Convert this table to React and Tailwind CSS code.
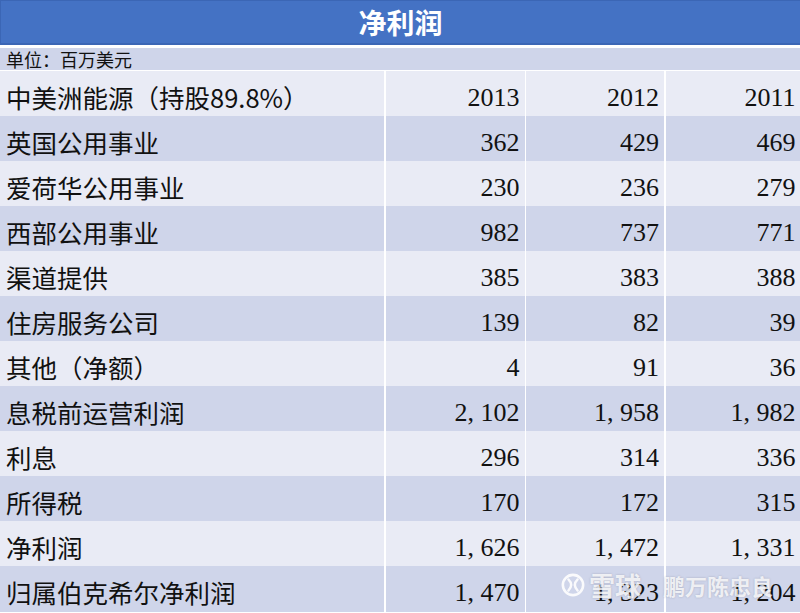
import React from "react";

const rows = [
  ["中美洲能源（持股89.8%）", "2013", "2012", "2011"],
  ["英国公用事业", "362", "429", "469"],
  ["爱荷华公用事业", "230", "236", "279"],
  ["西部公用事业", "982", "737", "771"],
  ["渠道提供", "385", "383", "388"],
  ["住房服务公司", "139", "82", "39"],
  ["其他（净额）", "4", "91", "36"],
  ["息税前运营利润", "2, 102", "1, 958", "1, 982"],
  ["利息", "296", "314", "336"],
  ["所得税", "170", "172", "315"],
  ["净利润", "1, 626", "1, 472", "1, 331"],
  ["归属伯克希尔净利润", "1, 470", "1, 323", "1, 204"],
];

const cjk = { fontFamily: '"Noto Sans CJK SC", "Noto Sans", sans-serif' };
const serif = { fontFamily: '"Liberation Serif", "DejaVu Serif", serif' };

export default function App() {
  return (
    <div className="relative w-[800px] h-[613px] bg-white overflow-hidden">
      <div
        className="h-[45px] bg-[#4472c4] border-t border-l border-b-2 border-[#3b66b5] flex items-center justify-center text-white text-[28px] font-bold"
        style={cjk}
      >
        净利润
      </div>
      <div
        className="mt-[3px] h-[22px] bg-[#cfd5ea] flex items-center pl-[6px] text-[18px] text-[#111]"
        style={cjk}
      >
        单位：百万美元
      </div>
      <div className="mt-[1px] flex flex-col gap-[2px]">
        {rows.map((r, i) => {
          const bg = i % 2 === 0 ? "bg-[#e9ebf5]" : "bg-[#cfd5ea]";
          return (
            <div
              key={i}
              className="grid grid-cols-[384px_139px_138px_135px] gap-x-[1.5px] h-[43px]"
            >
              <div
                className={`${bg} flex items-center pt-[6px] pl-[6px] text-[25.5px] text-[#111] whitespace-nowrap`}
                style={cjk}
              >
                {r[0]}
              </div>
              {r.slice(1).map((v, j) => (
                <div
                  key={j}
                  className={`${bg} flex items-center justify-end pt-[7px] pr-[5px] text-[26px] text-[#111] whitespace-nowrap`}
                  style={serif}
                >
                  {v}
                </div>
              ))}
            </div>
          );
        })}
      </div>

      <div
        className="absolute left-[561px] top-[572px] flex items-center text-white/80 pointer-events-none"
        style={{ ...cjk, textShadow: "0 0 2px rgba(80,80,100,0.35)" }}
      >
        <svg width="24" height="24" viewBox="0 0 26 26" className="opacity-90">
          <circle cx="13" cy="13" r="11" fill="none" stroke="white" strokeWidth="2.8" />
          <path d="M8 7 Q14 13 8 19" fill="none" stroke="white" strokeWidth="2.6" strokeLinecap="round" />
          <path d="M18 7 Q12 13 18 19" fill="none" stroke="white" strokeWidth="2.6" strokeLinecap="round" />
        </svg>
        <span className="ml-[4px] text-[26px] font-bold leading-none">雪球</span>
        <span className="ml-[22px] text-[22px] font-bold leading-none">鹏万陈忠良</span>
      </div>
    </div>
  );
}
